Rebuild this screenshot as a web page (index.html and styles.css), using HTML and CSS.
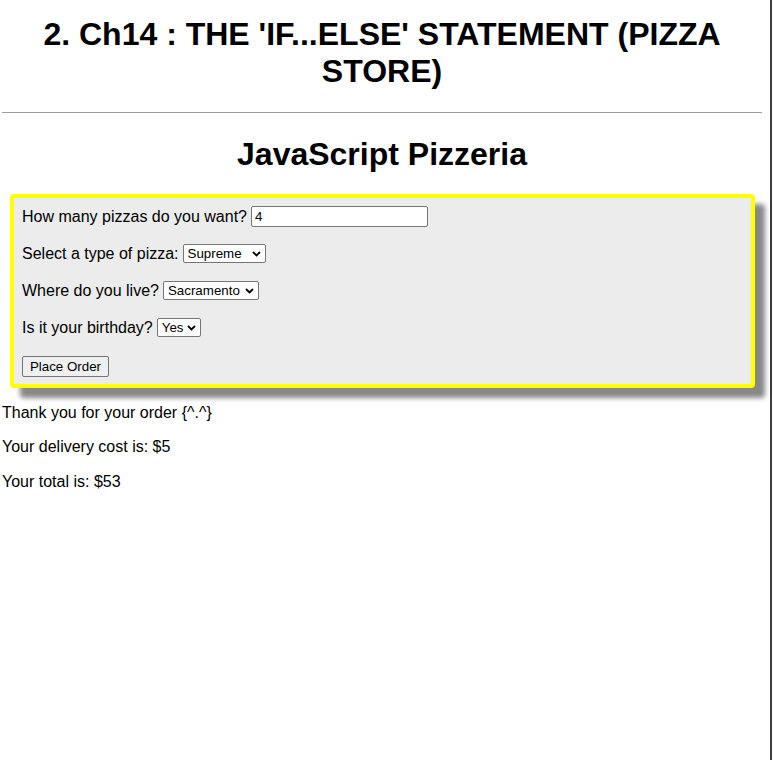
FILE: index.html
```html
<!DOCTYPE html>
<html lang="en">
<head>
<meta charset="utf-8">
<title>JavaScript Pizzeria</title>
<link rel="stylesheet" href="styles.css">
</head>
<body>
<div class="frame">
  <div class="content">
    <h1 class="title">2. Ch14 : THE 'IF...ELSE' STATEMENT (PIZZA STORE)</h1>
    <hr class="rule">
    <h2 class="subtitle">JavaScript Pizzeria</h2>
    <form class="order-box">
      <div class="row">
        <label class="label" for="qty">How many pizzas do you want?</label>
        <input class="text-input" id="qty" type="text" value="4">
      </div>
      <div class="row">
        <label class="label" for="type">Select a type of pizza:</label>
        <span class="select-wrap">
          <select class="select select-type" id="type">
            <option>Supreme</option>
          </select>
          <svg class="chev" width="9" height="6" viewBox="0 0 9 6"><path d="M1 1 L4.5 4.5 L8 1" fill="none" stroke="#000" stroke-width="1.8"/></svg>
        </span>
      </div>
      <div class="row">
        <label class="label" for="city">Where do you live?</label>
        <span class="select-wrap">
          <select class="select select-city" id="city">
            <option>Sacramento</option>
          </select>
          <svg class="chev" width="9" height="6" viewBox="0 0 9 6"><path d="M1 1 L4.5 4.5 L8 1" fill="none" stroke="#000" stroke-width="1.8"/></svg>
        </span>
      </div>
      <div class="row">
        <label class="label" for="bday">Is it your birthday?</label>
        <span class="select-wrap">
          <select class="select select-bday" id="bday">
            <option>Yes</option>
          </select>
          <svg class="chev" width="9" height="6" viewBox="0 0 9 6"><path d="M1 1 L4.5 4.5 L8 1" fill="none" stroke="#000" stroke-width="1.8"/></svg>
        </span>
      </div>
      <div class="row row-button">
        <button class="button" type="button">Place Order</button>
      </div>
    </form>
    <p class="result">Thank you for your order {^.^}</p>
    <p class="result">Your delivery cost is: $5</p>
    <p class="result">Your total is: $53</p>
  </div>
</div>
</body>
</html>
```

FILE: styles.css
```css
html, body {
  margin: 0;
  padding: 0;
  background: #fff;
}

body {
  font-family: "Liberation Sans", Arial, sans-serif;
  color: #000;
}

.frame {
  width: 772px;
  height: 760px;
  box-sizing: border-box;
  border-right: 2px solid #3d3d3d;
  overflow: hidden;
}

.content {
  padding: 0 8px 0 2px;
}

.title {
  font-size: 32px;
  font-weight: bold;
  line-height: 37px;
  text-align: center;
  margin: 16px 0 22px;
}

.rule {
  border: 0;
  border-top: 1px solid #9e9e9e;
  margin: 0;
  height: 0;
}

.subtitle {
  font-size: 32px;
  font-weight: bold;
  line-height: 37px;
  text-align: center;
  margin: 23px 0 21px;
}

.order-box {
  margin: 0 7px 0 8px;
  background: #ececec;
  border: 4px solid #ffff00;
  border-radius: 4px;
  box-shadow: 10px 10px 5px #888;
  padding: 8px 8px 7px;
}

.row {
  display: flex;
  align-items: center;
  gap: 4px;
  height: 21px;
  margin-bottom: 16px;
}

.row-button {
  height: 23px;
  align-items: flex-end;
  margin-bottom: 0;
}

.label {
  font-size: 16px;
  line-height: 18px;
}

.text-input {
  box-sizing: border-box;
  width: 177px;
  height: 21px;
  margin: 0;
  padding: 1px 3px;
  border: 1px solid #767676;
  border-radius: 2px;
  background: #fff;
  font-family: "Liberation Sans", Arial, sans-serif;
  font-size: 13.33px;
  color: #000;
}

.select-wrap {
  position: relative;
  display: inline-flex;
}

.select {
  appearance: none;
  -webkit-appearance: none;
  box-sizing: border-box;
  height: 19px;
  margin: 0;
  padding: 0 16px 0 4px;
  border: 1px solid #767676;
  border-radius: 2px;
  background: #fff;
  font-family: "Liberation Sans", Arial, sans-serif;
  font-size: 13.33px;
  color: #000;
}

.select-type {
  width: 83px;
}

.select-city {
  width: 96px;
}

.select-bday {
  width: 44px;
}

.chev {
  position: absolute;
  right: 5px;
  top: 7px;
  pointer-events: none;
}

.button {
  box-sizing: border-box;
  width: 87px;
  height: 21px;
  margin: 0;
  padding: 0 6px;
  border: 1px solid #767676;
  border-radius: 2px;
  background: #efefef;
  font-family: "Liberation Sans", Arial, sans-serif;
  font-size: 13.33px;
  color: #000;
}

.result {
  font-size: 16px;
  line-height: 18.4px;
  margin: 16px 0;
}
```
